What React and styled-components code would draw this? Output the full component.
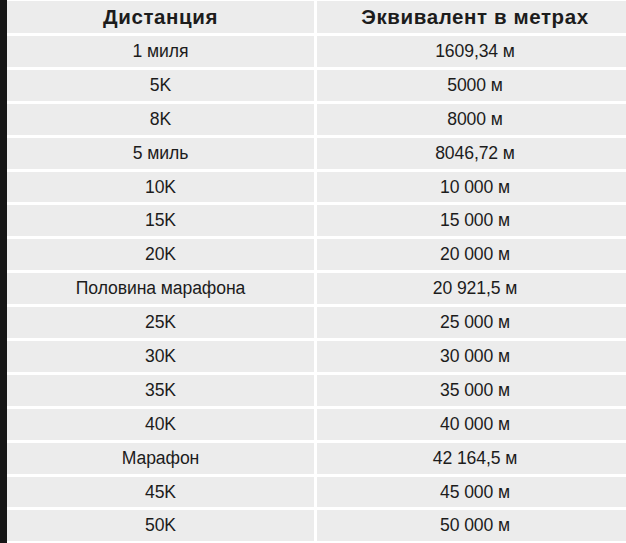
import React from "react";
import styled, { createGlobalStyle } from "styled-components";

const Global = createGlobalStyle`
  html, body { margin: 0; padding: 0; background: #ffffff; overflow: hidden; }
  body { width: 626px; height: 543px; }
`;

const Page = styled.div`
  display: flex;
  width: 626px;
  height: 543px;
  overflow: hidden;
`;

const Strip = styled.div`
  flex: 0 0 7px;
  background: #161616;
`;

const Grid = styled.div`
  display: grid;
  grid-template-columns: 307px 316px;
  grid-template-rows: 32px;
  grid-auto-rows: 30.9px;
  gap: 3px;
  padding-top: 1px;
  flex: 0 0 auto;
`;

const Cell = styled.div`
  background: #ececec;
  display: flex;
  align-items: center;
  justify-content: center;
  font-family: "Liberation Sans", Arial, sans-serif;
  font-size: ${(p) => (p.$head ? "20.5px" : "17.6px")};
  font-weight: ${(p) => (p.$head ? 700 : 400)};
  color: #1c1c1c;
  letter-spacing: ${(p) => (p.$head ? "0.6px" : "-0.1px")};
`;

const rows = [
  ["1 миля", "1609,34 м"],
  ["5K", "5000 м"],
  ["8K", "8000 м"],
  ["5 миль", "8046,72 м"],
  ["10K", "10 000 м"],
  ["15K", "15 000 м"],
  ["20K", "20 000 м"],
  ["Половина марафона", "20 921,5 м"],
  ["25K", "25 000 м"],
  ["30K", "30 000 м"],
  ["35K", "35 000 м"],
  ["40K", "40 000 м"],
  ["Марафон", "42 164,5 м"],
  ["45K", "45 000 м"],
  ["50K", "50 000 м"],
];

export default function App() {
  return (
    <Page>
      <Global />
      <Strip />
      <Grid>
        <Cell $head>Дистанция</Cell>
        <Cell $head>Эквивалент в метрах</Cell>
        {rows.map(([a, b]) => (
          <React.Fragment key={a}>
            <Cell>{a}</Cell>
            <Cell>{b}</Cell>
          </React.Fragment>
        ))}
      </Grid>
    </Page>
  );
}
